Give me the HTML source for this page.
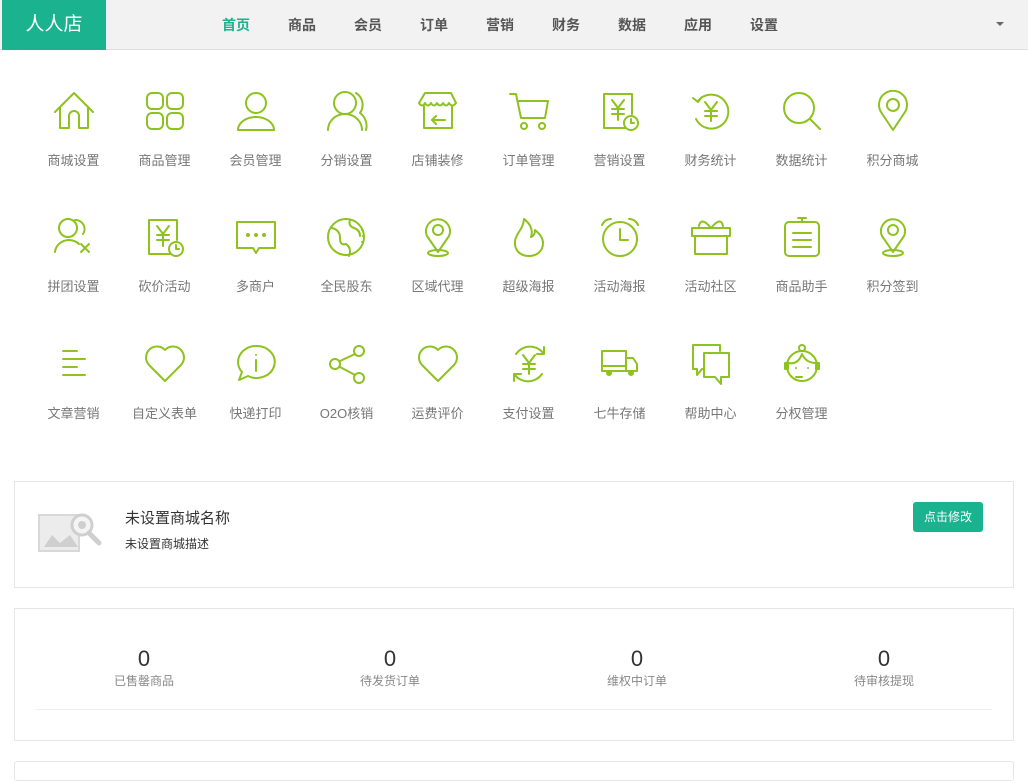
<!DOCTYPE html>
<html><head><meta charset="utf-8"><style>
*{margin:0;padding:0;box-sizing:border-box}
body{width:1028px;height:769px;overflow:hidden;background:#fff;font-family:"Liberation Sans","Noto Sans CJK SC",sans-serif;position:relative}
.hd{position:absolute;left:0;top:0;width:1028px;height:50px;background:#f2f2f2;border-bottom:1px solid #ddd}
.logo{position:absolute;left:2px;top:0;width:104px;height:50px;background:#1bb290;color:#fff;font-size:19px;line-height:50px;text-align:center}
.nav a{position:absolute;top:0;line-height:50px;font-size:14px;font-weight:bold;color:#555;text-decoration:none}
.caret{position:absolute;left:996px;top:22px;border-left:4px solid transparent;border-right:4px solid transparent;border-top:4px solid #666}
.it{position:absolute;width:91px;text-align:center;font-size:13px;color:#777}
.it svg{position:absolute;left:25px;width:42px;height:42px;fill:none;stroke:#8dc21f;stroke-width:2;stroke-linecap:round;stroke-linejoin:round}
.it span{position:absolute;left:0;width:91px}
.card{position:absolute;left:14px;width:1000px;border:1px solid #e6e6e6;background:#fff}
.btn{position:absolute;left:913px;top:502px;width:70px;height:30px;background:#1bb290;color:#fff;border-radius:3px;font-size:12px;line-height:30px;text-align:center}
.st{position:absolute;width:200px;text-align:center}
.st b{display:block;font-weight:normal;font-size:22px;color:#333;line-height:24px}
.st i{display:block;font-style:normal;font-size:12px;color:#888;line-height:20px}
</style></head><body>
<div class="hd"><div class="logo">人人店</div>
<div class="nav"><a style="left:222px;color:#1bb290">首页</a><a style="left:288px">商品</a><a style="left:354px">会员</a><a style="left:420px">订单</a><a style="left:486px">营销</a><a style="left:552px">财务</a><a style="left:618px">数据</a><a style="left:684px">应用</a><a style="left:750px">设置</a></div>
<div class="caret"></div></div>

<!-- row 1 -->
<div class="it" style="left:28px;top:90px"><svg viewBox="0 0 42 42" style="top:0"><path d="M2 22 21 3 40 22M7 17v21h9V26a5 5 0 0 1 10 0v12h9V17"/></svg><span style="top:60px">商城设置</span></div>
<div class="it" style="left:119px;top:90px"><svg viewBox="0 0 42 42" style="top:0"><rect x="3" y="3" width="16" height="16" rx="5"/><rect x="23" y="3" width="16" height="16" rx="5"/><rect x="3" y="23" width="16" height="16" rx="5"/><rect x="23" y="23" width="16" height="16" rx="5"/></svg><span style="top:60px">商品管理</span></div>
<div class="it" style="left:210px;top:90px"><svg viewBox="0 0 42 42" style="top:0"><circle cx="21" cy="13" r="10"/><path d="M3 40a18 13 0 0 1 36 0z"/></svg><span style="top:60px">会员管理</span></div>
<div class="it" style="left:301px;top:90px"><svg viewBox="0 0 42 42" style="top:0"><circle cx="19" cy="13" r="11"/><path d="M2 40a17 16 0 0 1 34 0M30 3a14 14 0 0 1 4 20 16 16 0 0 1 6 17"/></svg><span style="top:60px">分销设置</span></div>
<div class="it" style="left:392px;top:90px"><svg viewBox="0 0 42 42" style="top:0"><path d="M8 3h26l5 10q-4 5-7 0-3 5-6 0-3 5-6 0-3 5-6 0-3 5-6 0-3 5-6 0zM7 16v22h28V16M28 30H15l4-4M15 30l4 4"/></svg><span style="top:60px">店铺装修</span></div>
<div class="it" style="left:483px;top:90px"><svg viewBox="0 0 42 42" style="top:0"><path d="M2 4h6l5 24h24l3-17H10M13 28"/><circle cx="16" cy="36" r="3"/><circle cx="34" cy="36" r="3"/></svg><span style="top:60px">订单管理</span></div>
<div class="it" style="left:574px;top:90px"><svg viewBox="0 0 42 42" style="top:0"><path d="M26 38H5V4h28v20M13 10l6 8 6-8M19 18v12M13 19h12M13 24h12"/><circle cx="32" cy="33" r="7"/><path d="M32 29v4h3"/></svg><span style="top:60px">营销设置</span></div>
<div class="it" style="left:665px;top:90px"><svg viewBox="0 0 42 42" style="top:0"><path d="M8 11a17 17 0 1 1-2 18M3 8l5 4 4-5M15 12l6 8 6-8M21 20v11M15 21h12M15 26h12"/></svg><span style="top:60px">财务统计</span></div>
<div class="it" style="left:756px;top:90px"><svg viewBox="0 0 42 42" style="top:0"><circle cx="18" cy="18" r="15"/><path d="M29 29l10 10"/></svg><span style="top:60px">数据统计</span></div>
<div class="it" style="left:847px;top:90px"><svg viewBox="0 0 42 42" style="top:0"><path d="M21 40 9 22a14 14 0 1 1 24 0z"/><circle cx="21" cy="15" r="6"/></svg><span style="top:60px">积分商城</span></div>

<!-- row 2 -->
<div class="it" style="left:28px;top:216px"><svg viewBox="0 0 42 42" style="top:0"><circle cx="15" cy="12" r="9"/><path d="M2 36a14 13 0 0 1 24-8M22 4a9 9 0 0 1 8 14M28 28l8 8M36 28l-8 8"/></svg><span style="top:60px">拼团设置</span></div>
<div class="it" style="left:119px;top:216px"><svg viewBox="0 0 42 42" style="top:0"><path d="M26 38H5V4h28v20M13 10l6 8 6-8M19 18v12M13 19h12M13 24h12"/><circle cx="32" cy="33" r="7"/><path d="M32 29v4h3"/></svg><span style="top:60px">砍价活动</span></div>
<div class="it" style="left:210px;top:216px"><svg viewBox="0 0 42 42" style="top:0"><path d="M2 6h38v26H24l-3 5-3-5H2z"/><circle cx="13" cy="19" r="1"/><circle cx="21" cy="19" r="1"/><circle cx="29" cy="19" r="1"/></svg><span style="top:60px">多商户</span></div>
<div class="it" style="left:301px;top:216px"><svg viewBox="0 0 42 42" style="top:0"><circle cx="20" cy="21" r="18"/><path d="M6 12q8 2 8 10t6 6q6 4 3 12M24 4q-2 6 4 8t6 8M36 14v0M37 20v0M36 26v0"/></svg><span style="top:60px">全民股东</span></div>
<div class="it" style="left:392px;top:216px"><svg viewBox="0 0 42 42" style="top:0"><path d="M21 36 10 20a12 12 0 1 1 22 0z"/><circle cx="21" cy="14" r="5"/><ellipse cx="21" cy="37" rx="10" ry="3"/></svg><span style="top:60px">区域代理</span></div>
<div class="it" style="left:483px;top:216px"><svg viewBox="0 0 42 42" style="top:0"><path d="M21 40c-9 0-15-6-14-15 1-8 8-11 9-22 7 5 9 12 7 18 3-1 4-4 4-7 5 4 8 8 8 13 0 8-6 13-14 13z"/></svg><span style="top:60px">超级海报</span></div>
<div class="it" style="left:574px;top:216px"><svg viewBox="0 0 42 42" style="top:0"><circle cx="21" cy="23" r="17"/><path d="M21 13v11h8M3 9q3-6 9-6M39 9q-3-6-9-6"/></svg><span style="top:60px">活动海报</span></div>
<div class="it" style="left:665px;top:216px"><svg viewBox="0 0 42 42" style="top:0"><path d="M2 12h38v8H2zM5 20v18h32V20M21 12q-10-12-12-2M21 12q10-12 12-2"/></svg><span style="top:60px">活动社区</span></div>
<div class="it" style="left:756px;top:216px"><svg viewBox="0 0 42 42" style="top:0"><rect x="4" y="6" width="34" height="34" rx="4"/><path d="M21 2v4M17 2h8M12 17h18M12 24h18M12 31h18"/></svg><span style="top:60px">商品助手</span></div>
<div class="it" style="left:847px;top:216px"><svg viewBox="0 0 42 42" style="top:0"><path d="M21 36 10 20a12 12 0 1 1 22 0z"/><circle cx="21" cy="14" r="5"/><ellipse cx="21" cy="37" rx="10" ry="3"/></svg><span style="top:60px">积分签到</span></div>

<!-- row 3 -->
<div class="it" style="left:28px;top:343px"><svg viewBox="0 0 42 42" style="top:0"><path d="M10 8h14M10 16h22M10 24h14M10 32h22"/></svg><span style="top:60px">文章营销</span></div>
<div class="it" style="left:119px;top:343px"><svg viewBox="0 0 42 42" style="top:0"><path d="M21 38 5 22a9 9 0 0 1 16-15 9 9 0 0 1 16 15z"/></svg><span style="top:60px">自定义表单</span></div>
<div class="it" style="left:210px;top:343px"><svg viewBox="0 0 42 42" style="top:0"><path d="M21 3a18 16 0 1 1-8 30l-9 4 3-8A18 16 0 0 1 21 3zM21 17v11M21 12v0"/></svg><span style="top:60px">快递打印</span></div>
<div class="it" style="left:301px;top:343px"><svg viewBox="0 0 42 42" style="top:0"><circle cx="33" cy="8" r="5"/><circle cx="9" cy="21" r="5"/><circle cx="33" cy="35" r="5"/><path d="M14 18l15-7M14 24l15 8"/></svg><span style="top:60px">O2O核销</span></div>
<div class="it" style="left:392px;top:343px"><svg viewBox="0 0 42 42" style="top:0"><path d="M21 38 5 22a9 9 0 0 1 16-15 9 9 0 0 1 16 15z"/></svg><span style="top:60px">运费评价</span></div>
<div class="it" style="left:483px;top:343px"><svg viewBox="0 0 42 42" style="top:0"><path d="M8 11a17 17 0 0 1 28 0M34 31a17 17 0 0 1-28 0M36 4v7h-7M6 38v-7h7M15 12l6 8 6-8M21 20v11M15 21h12M15 26h12"/></svg><span style="top:60px">支付设置</span></div>
<div class="it" style="left:574px;top:343px"><svg viewBox="0 0 42 42" style="top:0"><path d="M3 8h24v20H3zM27 15h7l4 6v7H27M3 23h24"/><circle cx="10" cy="30" r="2" fill="#8dc21f"/><circle cx="32" cy="30" r="2" fill="#8dc21f"/></svg><span style="top:60px">七牛存储</span></div>
<div class="it" style="left:665px;top:343px"><svg viewBox="0 0 42 42" style="top:0"><path d="M30 8V2H3v24h4v6l5-6h2M14 10h25v24h-8v7l-6-7H14z"/></svg><span style="top:60px">帮助中心</span></div>
<div class="it" style="left:756px;top:343px"><svg viewBox="0 0 42 42" style="top:0"><circle cx="21" cy="23" r="15"/><circle cx="21" cy="5" r="3"/><path d="M7 20q10 2 14-9 4 9 14 9M15 25v0M27 25v0M21 34h-6"/><rect x="4" y="20" width="3" height="6" fill="#8dc21f"/><rect x="35" y="20" width="3" height="6" fill="#8dc21f"/></svg><span style="top:60px">分权管理</span></div>

<div class="card" style="top:481px;height:107px"></div>
<svg style="position:absolute;left:38px;top:513px" width="64" height="40" viewBox="0 0 64 40"><rect x="1" y="2" width="40" height="36" fill="#ececec" stroke="#d8d8d8" stroke-width="2"/><path d="M6 34l8-12 8 8 10-8 8 12z" fill="#cfcfcf"/><circle cx="44" cy="12" r="10" fill="#f4f4f4" stroke="#cfcfcf" stroke-width="3"/><circle cx="44" cy="12" r="4" fill="#cfcfcf"/><path d="M51 20l10 10" stroke="#cfcfcf" stroke-width="5" stroke-linecap="round"/></svg>
<div style="position:absolute;left:125px;top:507px;font-size:15px;color:#333">未设置商城名称</div>
<div style="position:absolute;left:125px;top:535px;font-size:12px;color:#333">未设置商城描述</div>
<div class="btn">点击修改</div>

<div class="card" style="top:608px;height:133px"></div>
<div style="position:absolute;left:35px;top:709px;width:957px;border-top:1px solid #eee"></div>
<div class="st" style="left:44px;top:647px"><b>0</b><i>已售罄商品</i></div>
<div class="st" style="left:290px;top:647px"><b>0</b><i>待发货订单</i></div>
<div class="st" style="left:537px;top:647px"><b>0</b><i>维权中订单</i></div>
<div class="st" style="left:784px;top:647px"><b>0</b><i>待审核提现</i></div>
<div class="card" style="top:761px;height:20px;border-radius:3px"></div>
</body></html>
